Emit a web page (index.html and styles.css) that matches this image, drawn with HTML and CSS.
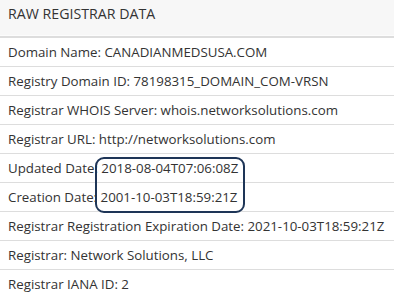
FILE: index.html
```html
<!DOCTYPE html>
<html lang="en">
<head>
    <meta charset="UTF-8">
    <meta name="viewport" content="width=device-width, initial-scale=1.0">
    <title>Raw Registrar Data</title>
    <link rel="stylesheet" href="styles.css">
</head>
<body>
    <div class="panel">
        <div class="panel-header">RAW REGISTRAR DATA</div>
        <div class="rows">
            <div class="row">Domain Name: CANADIANMEDSUSA.COM</div>
            <div class="row">Registry Domain ID: 78198315_DOMAIN_COM-VRSN</div>
            <div class="row">Registrar WHOIS Server: whois.networksolutions.com</div>
            <div class="row">Registrar URL: http://networksolutions.com</div>
            <div class="row">Updated Date: 2018-08-04T07:06:08Z</div>
            <div class="row">Creation Date: 2001-10-03T18:59:21Z</div>
            <div class="row">Registrar Registration Expiration Date: 2021-10-03T18:59:21Z</div>
            <div class="row">Registrar: Network Solutions, LLC</div>
            <div class="row">Registrar IANA ID: 2</div>
        </div>
        <div class="highlight"></div>
    </div>
</body>
</html>
```

FILE: styles.css
```css
:root {
    --text: #333333;
    --header-bg: #f7f7f7;
    --line: #dddddd;
    --mark: #1e3557;
}

* {
    margin: 0;
    padding: 0;
    box-sizing: border-box;
}

body {
    font-family: 'Open Sans', 'Noto Sans', sans-serif;
    background: #fff;
    color: var(--text);
    overflow: hidden;
}

.panel {
    position: relative;
    width: 394px;
}

.panel-header {
    height: 36px;
    background: var(--header-bg);
    border-bottom: 1px solid #fcfcfc;
    padding: 4px 8px 0;
    font-size: 14.2px;
    line-height: 19px;
}

.rows {
    border-top: 2px solid var(--line);
}

.row {
    height: 29px;
    padding: 0 8px;
    display: flex;
    align-items: center;
    font-size: 13.3px;
    white-space: nowrap;
    border-bottom: 1px solid var(--line);
}

.highlight {
    position: absolute;
    left: 95px;
    top: 157px;
    width: 150px;
    height: 56px;
    border: 2.5px solid var(--mark);
    border-radius: 9px;
}
```
